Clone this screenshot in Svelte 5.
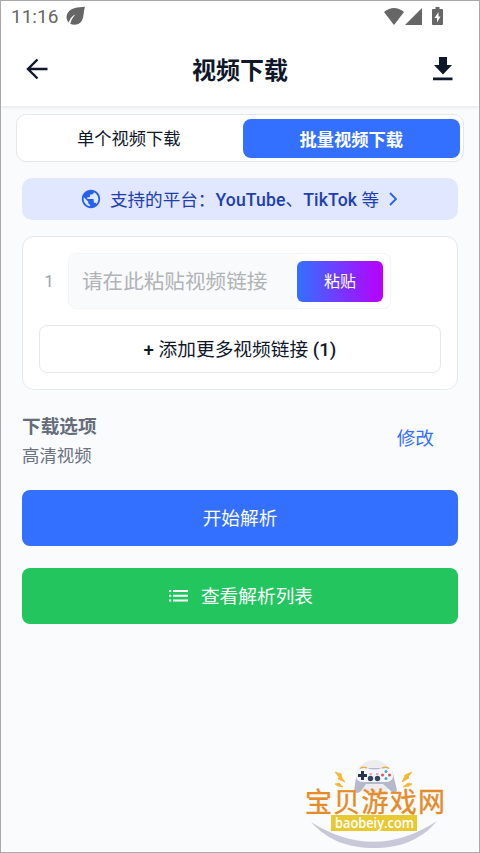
<script>
	let activeTab = "batch";
	let links = [""];

	const tabs = [
		{ key: "single", title: "单个视频下载" },
		{ key: "batch", title: "批量视频下载" },
	];

	function addLink() {
		links = [...links, ""];
	}

	async function paste(index) {
		links[index] = await navigator.clipboard.readText();
	}
</script>

<div class="screen">
	<div class="top">
		<div class="status-bar">
			<span class="clock">11:16</span>
			<svg class="leaf" width="20" height="20" viewBox="0 0 20 20">
				<path
					d="M19 .8C12 1.200 5 2 2 6.500C-.5 10.500 .5 14.500 2.800 16.500C3.600 13 6 10 9.500 8.200C7 11 5 14 4.300 17.800C8 20 14 18.500 16 14.500C18 10.500 17.500 5 19 .8Z"
				/>
			</svg>
			<div class="status-icons">
				<svg width="20" height="17" viewBox="0 0 20 17">
					<path d="M0 4Q10-4 20 4L10 17Z" />
				</svg>
				<svg class="signal" width="17" height="17" viewBox="0 0 17 17">
					<path d="M17 0V17H0Z" />
				</svg>
				<svg class="battery" width="11" height="18" viewBox="0 0 11 18">
					<path
						fill-rule="evenodd"
						d="M3.500 0H7.500V2H10Q11 2 11 3V17Q11 18 10 18H1Q0 18 0 17V3Q0 2 1 2H3.500ZM6.500 5L2.500 11H5V15.500L8.500 9.500H6.500Z"
					/>
				</svg>
			</div>
		</div>

		<header>
			<svg class="back" width="22" height="22" viewBox="0 0 22 22">
				<path d="M11.500 1.500L2 11L11.500 20.500M2 11H21.500" />
			</svg>
			<h1>视频下载</h1>
			<svg width="20" height="24" viewBox="0 0 20 24">
				<path d="M6 0H14V8H19L10 17.500L1 8H6ZM0 20.500H19.500V23.200H0Z" />
			</svg>
		</header>
	</div>

	<div class="tabs">
		{#each tabs as tab}
			<button
				class="tab {activeTab === tab.key ? 'active' : ''}"
				on:click={() => (activeTab = tab.key)}
			>
				{tab.title}
			</button>
		{/each}
	</div>

	<main>
		<div class="platforms">
			<svg width="22" height="22" viewBox="0 0 24 24">
				<path
					d="M12 2C6.480 2 2 6.480 2 12s4.480 10 10 10 10-4.480 10-10S17.520 2 12 2zm-1 17.930c-3.950-.490-7-3.850-7-7.930 0-.620.080-1.210.210-1.790L9 15v1c0 1.100.900 2 2 2v1.930zm6.900-2.540c-.260-.810-1-1.390-1.900-1.390h-1v-3c0-.550-.450-1-1-1H8v-2h2c.550 0 1-.450 1-1V7h2c1.100 0 2-.900 2-2v-.410c2.930 1.190 5 4.060 5 7.410 0 2.080-.800 3.970-2.100 5.390z"
				/>
			</svg>
			<span class="platform-names">支持的平台：<b>YouTube</b>、<b>TikTok</b> 等</span>
			<svg class="chevron" width="8" height="14" viewBox="0 0 8 14">
				<path d="M1 1L7 7L1 13" />
			</svg>
		</div>

		<div class="card">
			{#each links as link, index}
				<div class="link-row">
					<span class="number">{index + 1}</span>
					<div class="link-box">
						<input type="text" placeholder="请在此粘贴视频链接" bind:value={link} />
						<button class="paste" on:click={() => paste(index)}>粘贴</button>
					</div>
				</div>
			{/each}
			<button class="add" on:click={addLink}><b>+</b> 添加更多视频链接 <b>({links.length})</b></button>
		</div>

		<div class="options">
			<div>
				<h2>下载选项</h2>
				<p>高清视频</p>
			</div>
			<button class="edit">修改</button>
		</div>

		<button class="action start">开始解析</button>
		<button class="action list">
			<svg width="19" height="12" viewBox="0 0 19 12">
				<path
					d="M0 0H2.200V2H0ZM4 0H19V2H4ZM0 4.700H2.200V6.700H0ZM4 4.700H19V6.700H4ZM0 9.400H2.200V11.400H0ZM4 9.400H19V11.400H4Z"
				/>
			</svg>
			查看解析列表
		</button>
	</main>

	<svg class="stamp" width="160" height="103" viewBox="0 0 160 103">
		<circle cx="79" cy="28" r="18" fill="#ededf0" />
		<path d="M16 72Q79 112 142 71C125 91 104 98 79 98S33 91 16 72Z" fill="#c8c9d8" />
		<!-- controller -->
		<path
			d="M65 18H94Q98 20 99 28L102 40Q101 44 97 42L88 34H71L66 41Q62 45 59 41L61 28Q61 20 65 18Z"
			fill="#b4b8ca"
		/>
		<path
			d="M65 18H72Q79 21 87 18H94Q99 20 98 27Q97 32 90 32H69Q61 32 61 26Q61 20 65 18Z"
			fill="#f5f5fa"
		/>
		<path d="M65 18.500Q68 16.500 72 18M87 18Q91 16.500 94 18.500" stroke="#edaa48" stroke-width="1.500" fill="none" />
		<path d="M66 21H69V24H72V27H69V30H66V27H63V24H66Z" fill="#26364e" />
		<circle cx="75.500" cy="28.500" r="2.700" fill="#35485f" />
		<circle cx="82.500" cy="28.500" r="2.700" fill="#35485f" />
		<path d="M74.500 24H77M81 24H83.500" stroke="#e56678" />
		<circle cx="91" cy="21.500" r="1.500" fill="#3bafc0" />
		<circle cx="91" cy="28.500" r="1.500" fill="#3bafc0" />
		<circle cx="87.500" cy="25" r="1.500" fill="#e84e5d" />
		<circle cx="94.500" cy="25" r="1.500" fill="#e84e5d" />
		<path
			d="M40 22L46 24L47 28L50 32L43 29L44 27ZM117 22L110 25L109 28L107 32L114 28L113 27ZM40 34L44 33L48 37L43 36ZM117 34L113 33L108 37L114 36Z"
			fill="#f4b72f"
			stroke="#f4b72f"
			stroke-width="0.8"
		/>
		<text class="stamp-name" x="10" y="61.500" textLength="140">宝贝游戏网</text>
		<rect x="36" y="65" width="86" height="16" fill="#e9c931" />
		<text class="stamp-site" x="40" y="78" textLength="79" lengthAdjust="spacingAndGlyphs">baobeiy.com</text>
	</svg>
</div>

<style>
	:global(body) {
		background: #fafbfd;
	}

	.screen {
		position: relative;
		box-sizing: border-box;
		height: 853px;
		border: 1px solid #a9a9ab;
		overflow: hidden;
		background: #fafbfd;
		color: #0f172a;
		font-family: Roboto, "Noto Sans CJK SC", sans-serif;
	}

	button {
		margin: 0;
		padding: 0;
		border: none;
		background: none;
		font: inherit;
		color: inherit;
		cursor: pointer;
	}

	b {
		font-weight: 500;
	}

	svg {
		display: block;
		flex: none;
	}

	.top {
		height: 105px;
		background: #fff;
		box-shadow: 0 1px 4px rgba(15, 23, 42, 0.1);
	}

	.status-bar {
		display: flex;
		align-items: center;
		height: 30px;
		padding: 0 36px 0 10px;
		color: #666;
		fill: #666;
	}

	.clock {
		font-size: 19px;
	}

	.leaf {
		margin-left: 8px;
	}

	.status-icons {
		display: flex;
		align-items: center;
		margin-left: auto;
	}

	.signal {
		margin: 0 10px 0 1px;
	}

	header {
		display: flex;
		align-items: center;
		justify-content: space-between;
		height: 76px;
		padding: 0 26px 0 25px;
		fill: #0f172a;
	}

	.back {
		fill: none;
		stroke: #0f172a;
		stroke-width: 2.4;
	}

	h1 {
		margin: 0;
		padding: 3px 1px 0 0;
		font-size: 24px;
		font-weight: 700;
		line-height: 36px;
	}

	.tabs {
		display: flex;
		gap: 5px;
		box-sizing: border-box;
		height: 48px;
		margin: 8px 15px 0;
		padding: 4px 3px 3px;
		border: 1px solid #e5e7eb;
		border-radius: 10px;
		background: #fff;
	}

	.tab {
		flex: 1;
		padding-bottom: 3px;
		border-radius: 8px;
		font-size: 17.3px;
	}

	.tab.active {
		padding-bottom: 1px;
		background: #3370ff;
		color: #fff;
		font-weight: 700;
	}

	main {
		padding: 16px 21px 0;
	}

	.platforms {
		display: flex;
		align-items: center;
		justify-content: center;
		height: 42px;
		padding-right: 3px;
		border-radius: 10px;
		background: #e0e7ff;
		color: #1e40af;
		font-size: 17.6px;
		fill: #2563eb;
	}

	.platform-names {
		margin: 0 10px 2px 8px;
	}

	.platform-names b {
		letter-spacing: 0.15px;
	}

	.chevron {
		fill: none;
		stroke: #2563eb;
		stroke-width: 1.8;
	}

	.card {
		box-sizing: border-box;
		height: 154px;
		margin-top: 16px;
		padding: 16px;
		border: 1px solid #e5e9eb;
		border-radius: 12px;
		background: #fff;
	}

	.link-row {
		display: flex;
		align-items: center;
	}

	.number {
		width: 20px;
		margin-right: 9px;
		text-align: center;
		color: #9ca3af;
		font-size: 17px;
	}

	.link-box {
		display: flex;
		align-items: center;
		box-sizing: border-box;
		width: 323px;
		height: 56px;
		padding-right: 7px;
		border: 1px solid #f3f4f6;
		border-radius: 8px;
		overflow: hidden;
	}

	input {
		box-sizing: border-box;
		flex: 1;
		min-width: 0;
		height: 100%;
		padding: 1px 13px 0;
		border: none;
		background: #f8fafc;
		font: inherit;
		font-size: 20.6px;
	}

	input::placeholder {
		color: #b1b3b5;
	}

	.paste {
		width: 86px;
		height: 41px;
		padding-bottom: 2px;
		border-radius: 6px;
		background: linear-gradient(90deg, #3370ff, #b800ff);
		color: #fff;
		font-size: 16px;
	}

	.add {
		display: block;
		box-sizing: border-box;
		width: 100%;
		height: 48px;
		margin-top: 16px;
		padding-bottom: 4px;
		border: 1px solid #e5e7eb;
		border-radius: 8px;
		font-size: 18.7px;
	}

	.options {
		display: flex;
		align-items: center;
		justify-content: space-between;
		height: 100px;
		padding-right: 24px;
		color: #6b7280;
	}

	h2 {
		margin: 0;
		padding-top: 2px;
		font-size: 18.7px;
		font-weight: 700;
		line-height: 30px;
		color: #656d7a;
	}

	p {
		margin: 0;
		font-size: 17.4px;
		line-height: 29px;
	}

	.edit {
		margin-top: -7px;
		color: #3370ff;
		font-size: 18.7px;
	}

	.action {
		display: flex;
		align-items: center;
		justify-content: center;
		width: 100%;
		height: 56px;
		padding-bottom: 3px;
		border-radius: 8px;
		color: #fff;
		font-size: 18.7px;
	}

	.start {
		background: #3370ff;
	}

	.list {
		gap: 13px;
		margin-top: 22px;
		padding-left: 2px;
		background: #22c55e;
		fill: #fff;
	}

	.list svg {
		margin-top: 2px;
	}

	/* site mark laid over the page */
	.stamp {
		position: absolute;
		right: 24px;
		bottom: -1px;
	}

	.stamp-name {
		fill: #e58c28;
		stroke: #e58c28;
		stroke-width: 0.4;
		font-size: 27px;
	}

	.stamp-site {
		fill: #fff;
		font-family: "Open Sans", sans-serif;
		font-size: 14px;
		font-weight: 600;
	}
</style>
